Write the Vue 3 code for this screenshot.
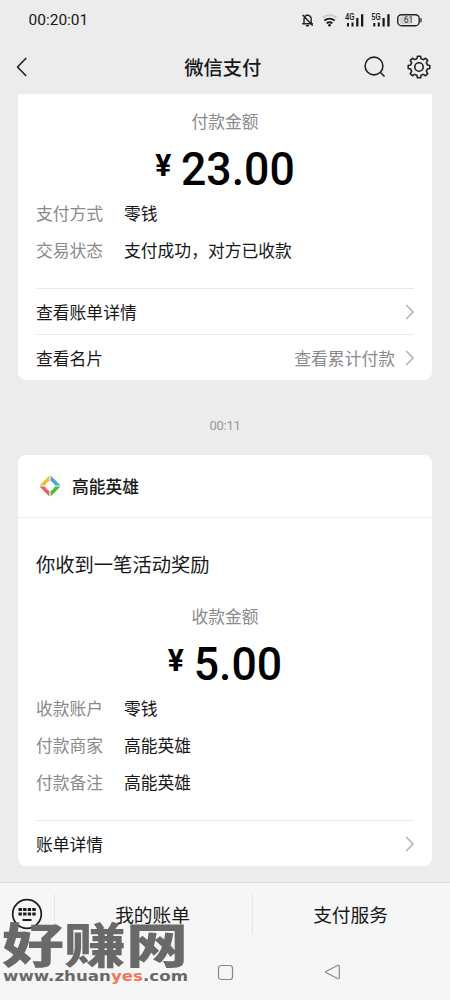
<template>
	<div class="phone">
		<header class="top">
			<div class="status">
				<span class="clock">00:20:01</span>
				<svg class="status-icons" width="124" height="20" viewBox="0 0 124 20">
					<g fill="none" stroke="#222" stroke-width="1.4" stroke-linecap="round" stroke-linejoin="round">
						<path d="M4 13.500V9.300Q4 5.800 7.500 5Q11.200 5.800 11.200 9.300V13.500M2.600 13.700H12.400M6.500 15.800H8.500M3 5.200L12.300 15.300" />
					</g>
					<g fill="none" stroke-width="1.8">
						<path d="M22.300 7.600Q29.500 2.500 36.700 7.600" stroke="#c9c9c9" />
						<path d="M24.300 10.400Q29.500 6.800 34.700 10.400M26.600 13.200Q29.500 11.300 32.400 13.200" stroke="#161616" />
					</g>
					<circle cx="29.500" cy="15.200" r="1.300" fill="#161616" />
					<g v-for="(net, i) in ['4G', '5G']" :key="net" :transform="`translate(${i * 26.300} 0)`" fill="#161616">
						<text x="45" y="10.300" font-size="9" font-weight="500" textLength="9.500" lengthAdjust="spacingAndGlyphs">{{ net }}</text>
						<path d="M47 13h2v3.500h-2zM51.500 12.500h2v4h-2zM56.200 8h2.200v8.500h-2.200zM61 4.300h2.300v12.200h-2.300z" />
					</g>
					<rect x="97.700" y="4.700" width="21.500" height="11" rx="3.800" fill="none" stroke="#222" stroke-width="1.400" />
					<rect x="99.500" y="6.500" width="12" height="7.500" rx="2" fill="#d2d2d2" />
					<path d="M121 8.200v4" stroke="#222" stroke-width="1.300" />
					<text x="103.800" y="13.200" font-size="8.500" fill="#333">61</text>
				</svg>
			</div>
			<div class="nav">
				<svg class="back" width="12" height="22" viewBox="0 0 12 22">
					<path d="M10.200 2L1.500 11L10.200 20" />
				</svg>
				<h1>微信支付</h1>
				<div class="actions">
					<svg width="22" height="22" viewBox="0 0 22 22">
						<circle cx="10" cy="10" r="8.900" />
						<path d="M16.300 16.300L20.500 20.500" />
					</svg>
					<svg width="24" height="24" viewBox="-12 -12 24 24">
						<path :d="gearPath" />
						<circle r="4.200" />
					</svg>
				</div>
			</div>
		</header>

		<main>
			<section class="card first">
				<p class="label">付款金额</p>
				<p class="amount"><span>¥</span>23.00</p>
				<dl>
					<div v-for="row in payment" :key="row.name">
						<dt>{{ row.name }}</dt>
						<dd>{{ row.value }}</dd>
					</div>
				</dl>
				<div class="link">
					查看账单详情
					<svg class="arrow" viewBox="0 0 10 16"><path d="M1.200 1L8 8L1.200 15" /></svg>
				</div>
				<div class="link">
					查看名片
					<span class="hint">查看累计付款</span>
					<svg class="arrow" viewBox="0 0 10 16"><path d="M1.200 1L8 8L1.200 15" /></svg>
				</div>
			</section>

			<time>00:11</time>

			<section class="card">
				<div class="merchant">
					<svg width="22" height="22" viewBox="-11 -11 22 22">
						<path d="M-.600 -10.500V-5L-3.200 -3.200L-5 -.600H-10.500Z" fill="#f4bd2c" />
						<path d="M.600 -10.500V-5L3.200 -3.200L5 -.600H10.500Z" fill="#45a5dc" />
						<path d="M-.600 10.500V5L-3.200 3.200L-5 .600H-10.500Z" fill="#e65c68" />
						<path d="M.600 10.500V5L3.200 3.200L5 .600H10.500Z" fill="#45bd35" />
					</svg>
					高能英雄
				</div>
				<h2>你收到一笔活动奖励</h2>
				<p class="label">收款金额</p>
				<p class="amount"><span>¥</span>5.00</p>
				<dl>
					<div v-for="row in reward" :key="row.name">
						<dt>{{ row.name }}</dt>
						<dd>{{ row.value }}</dd>
					</div>
				</dl>
				<div class="link">
					账单详情
					<svg class="arrow" viewBox="0 0 10 16"><path d="M1.200 1L8 8L1.200 15" /></svg>
				</div>
			</section>
		</main>

		<footer>
			<div class="tabs">
				<div class="keyboard">
					<svg width="32" height="32" viewBox="0 0 32 32">
						<circle cx="16" cy="16" r="14.300" fill="none" stroke="#1b1b1b" stroke-width="1.700" />
						<path d="M7.500 11.500H25M7.500 16H25" stroke="#1b1b1b" stroke-width="3.200" stroke-dasharray="3.400 1.200" />
						<path d="M11.500 22H20.500" stroke="#1b1b1b" stroke-width="2" />
					</svg>
				</div>
				<div class="tab">我的账单</div>
				<div class="tab">支付服务</div>
			</div>
			<div class="system">
				<svg width="130" height="20" viewBox="0 0 130 20">
					<rect x="1.500" y="3.500" width="14" height="14" rx="2.800" />
					<path d="M109.300 9.300L120.600 3.500Q122.300 2.800 122.300 4.500V15.500Q122.300 17.300 120.600 16.500L109.300 10.700Q108 10 109.300 9.300Z" />
				</svg>
			</div>
		</footer>

		<svg class="watermark" width="190" height="90" viewBox="0 0 190 90">
			<text class="mark" x="2" y="63" textLength="186" lengthAdjust="spacingAndGlyphs">好赚网</text>
			<text class="site" x="3" y="81" textLength="185" lengthAdjust="spacingAndGlyphs">www.zhuan<tspan>yes</tspan>.com</text>
		</svg>
	</div>
</template>

<script setup>
const payment = [
	{ name: '支付方式', value: '零钱' },
	{ name: '交易状态', value: '支付成功，对方已收款' }
];

const reward = [
	{ name: '收款账户', value: '零钱' },
	{ name: '付款商家', value: '高能英雄' },
	{ name: '付款备注', value: '高能英雄' }
];

// Eight teeth, four corners each: [angle offset, radius]
const corners = [[-14, 8.6], [-8, 10.9], [8, 10.9], [14, 8.6]];
const points = [];
for (let tooth = 0; tooth < 8; tooth++) {
	for (const [offset, radius] of corners) {
		const angle = ((tooth * 45 + offset) * Math.PI) / 180;
		points.push(`${(radius * Math.cos(angle)).toFixed(2)} ${(radius * Math.sin(angle)).toFixed(2)}`);
	}
}
const gearPath = `M${points.join('L')}Z`;
</script>

<style>
body {
	margin: 0;
}
</style>

<style scoped>
.phone {
	position: relative;
	display: flex;
	flex-direction: column;
	width: 450px;
	height: 1000px;
	overflow: hidden;
	background: #ececec;
	color: #181818;
	font-family: "Noto Sans CJK SC", sans-serif;
	font-size: 16.8px;
}

h1,
h2,
p,
dl,
dd {
	margin: 0;
}

svg {
	display: block;
	flex-shrink: 0;
}

.top {
	height: 94px;
}

.status {
	display: flex;
	align-items: center;
	justify-content: space-between;
	height: 40px;
	padding: 0 26px 0 28.5px;
}

.clock {
	font-family: Roboto, sans-serif;
	font-size: 15.5px;
}

.status-icons {
	font-family: Roboto, sans-serif;
}

.nav {
	display: grid;
	grid-template-columns: 1fr auto 1fr;
	align-items: center;
	height: 54px;
	padding: 0 19.5px 0 16px;
}

.nav svg {
	fill: none;
	stroke: #222;
	stroke-width: 1.6;
	stroke-linejoin: round;
}

h1 {
	margin-right: 1px;
	font-size: 19.3px;
	font-weight: 500;
	line-height: 26px;
	padding-bottom: 1px;
}

.actions {
	display: flex;
	align-items: center;
	justify-content: flex-end;
	gap: 21px;
}

main {
	height: 788px;
	padding: 0 18px;
}

.card {
	overflow: hidden;
	border-radius: 8px;
	background: #fff;
}

.card.first {
	padding-top: 14px;
	border-radius: 0 0 8px 8px;
}

.label {
	color: #8a8a8a;
	line-height: 26px;
	text-align: center;
}

.amount {
	display: flex;
	justify-content: center;
	height: 61px;
	color: #000;
	font-family: Roboto, sans-serif;
	font-size: 46px;
	font-weight: 500;
	line-height: 70px;
	transform: scaleX(0.97);
}

.amount span {
	margin-right: 10px;
	font-size: 31px;
	font-weight: 700;
	line-height: 63px;
}

dl {
	padding: 0 18px 19px;
}

dl div {
	display: flex;
	line-height: 37px;
}

dt {
	width: 88px;
	color: #8a8a8a;
}

.link {
	display: flex;
	align-items: center;
	height: 45px;
	margin: 0 18px;
	border-top: 1px solid #e8e8e8;
}

.hint {
	margin-left: auto;
	margin-right: 10px;
	color: #8a8a8a;
}

.arrow {
	width: 10px;
	height: 16px;
	margin-left: auto;
	margin-right: -1px;
	fill: none;
	stroke: #b4b4b4;
	stroke-width: 1.6;
}

.hint + .arrow {
	margin-left: 0;
}

time {
	display: block;
	height: 75px;
	color: #999;
	font-family: Roboto, sans-serif;
	font-size: 13px;
	letter-spacing: -0.3px;
	line-height: 92px;
	text-align: center;
}

.merchant {
	display: flex;
	align-items: center;
	gap: 11px;
	height: 62px;
	padding-left: 21px;
	border-bottom: 1px solid #eee;
	font-weight: 500;
}

h2 {
	padding: 32px 18px 25px;
	font-size: 19.3px;
	font-weight: 400;
	line-height: 28px;
}

footer {
	height: 117px;
	border-top: 1px solid #dadada;
	background: #f6f6f6;
}

.tabs {
	display: flex;
	align-items: center;
	height: 62px;
}

.keyboard {
	display: flex;
	align-items: center;
	justify-content: center;
	width: 54px;
	height: 40px;
}

.tab {
	flex: 1;
	height: 40px;
	border-left: 1px solid #e6e6e6;
	font-size: 18.7px;
	line-height: 40px;
	text-indent: -2px;
	text-align: center;
}

.system {
	display: flex;
	justify-content: flex-end;
	padding: 17px 103px 0 0;
}

.system svg {
	fill: none;
	stroke: #888;
	stroke-width: 1.2;
}

.watermark {
	position: absolute;
	left: 0;
	top: 900px;
}

.mark {
	fill: #696969;
	font-size: 48px;
	font-weight: 900;
}

.site {
	fill: #696969;
	stroke: #f6f6f6;
	stroke-width: 1px;
	paint-order: stroke;
	font-family: "DejaVu Sans", sans-serif;
	font-size: 14px;
	font-weight: 700;
}

.site tspan {
	fill: #f4775a;
}
</style>
